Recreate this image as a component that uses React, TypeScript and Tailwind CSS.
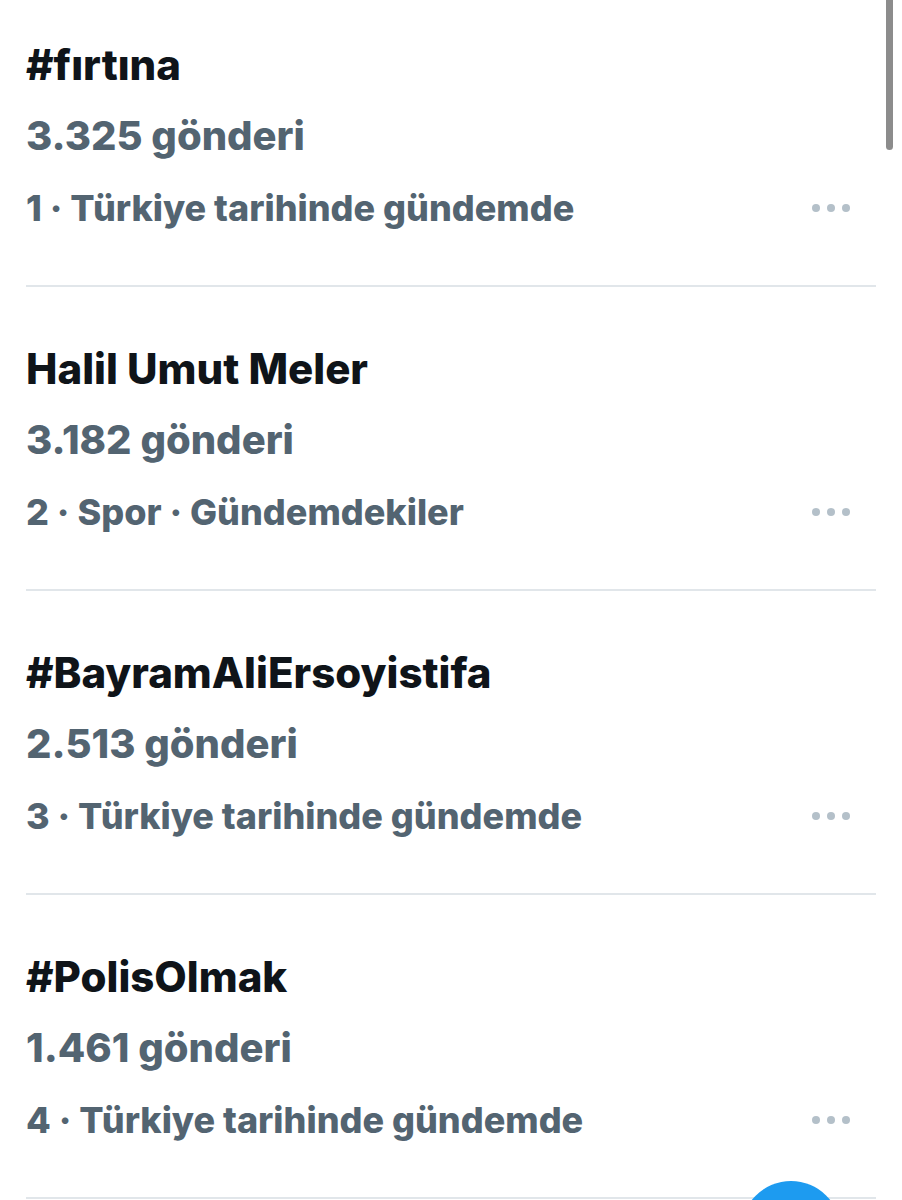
import React from "react";

type Trend = {
  rank: number;
  context: string;
  title: string;
  count: string;
};

const trends: Trend[] = [
  { rank: 1, context: "Türkiye tarihinde gündemde", title: "#fırtına", count: "3.325 gönderi" },
  { rank: 2, context: "Spor · Gündemdekiler", title: "Halil Umut Meler", count: "3.182 gönderi" },
  { rank: 3, context: "Türkiye tarihinde gündemde", title: "#BayramAliErsoyistifa", count: "2.513 gönderi" },
  { rank: 4, context: "Türkiye tarihinde gündemde", title: "#PolisOlmak", count: "1.461 gönderi" },
];

// Trend row
const TrendItem: React.FC<{ trend: Trend; first: boolean }> = ({ trend, first }) => (
  <div className="px-[26px]">
    <div
      className={`flex flex-col border-b-2 border-[#e1e6ea] pb-[41px] ${
        first ? "pt-[28px]" : "pt-[45px]"
      }`}
    >
      <div className="h-[72px] flex items-center text-[42px] font-extrabold text-[#0f1419]">
        {trend.title}
      </div>
      <div className="h-[72px] flex items-center text-[40px] font-extrabold text-[#536471]">
        {trend.count}
      </div>
      <div className="h-[72px] flex items-center justify-between text-[36px] font-extrabold text-[#536471]">
        <span>
          {trend.rank} · {trend.context}
        </span>
        <div className="flex items-center gap-[7px] pr-[26px]">
          <span className="w-[8px] h-[8px] rounded-full bg-[#b4c0c9]" />
          <span className="w-[8px] h-[8px] rounded-full bg-[#b4c0c9]" />
          <span className="w-[8px] h-[8px] rounded-full bg-[#b4c0c9]" />
        </div>
      </div>
    </div>
  </div>
);

export default function App() {
  return (
    <div
      className="relative w-[902px] h-[1200px] overflow-hidden bg-white"
      style={{ fontFamily: "Inter, 'Noto Sans', sans-serif" }}
    >
      {trends.map((t, i) => (
        <TrendItem key={t.rank} trend={t} first={i === 0} />
      ))}

      {/* scrollbar thumb */}
      <div className="absolute right-[9px] top-[-6px] w-[7px] h-[156px] rounded-full bg-[#8c8c8c]" />

      {/* floating compose button */}
      <div className="absolute left-[741px] top-[1181px] w-[100px] h-[100px] rounded-full bg-[#1d9bf0]" />
    </div>
  );
}
